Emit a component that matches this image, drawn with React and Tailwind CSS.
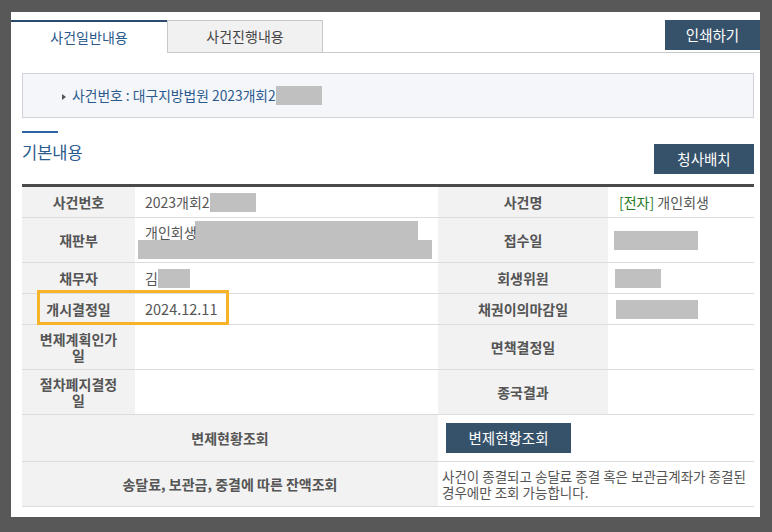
import React from "react";

const FONT = { fontFamily: '"Noto Sans CJK KR", "Noto Sans", sans-serif' };

function Label({ children, className = "" }) {
  return (
    <div
      className={
        "bg-[#f2f2f2] flex items-center justify-center text-center font-bold text-[#555555] text-[14px] leading-[16px] whitespace-nowrap " +
        className
      }
    >
      {children}
    </div>
  );
}

function Redact({ w, h = 19, className = "" }) {
  return (
    <span
      className={"inline-block bg-[#c0c0c0] align-middle " + className}
      style={{ width: w, height: h }}
    />
  );
}

export default function App() {
  return (
    <div
      className="w-[772px] h-[532px] bg-[#585858] pt-[12px] pl-[11px] pr-[12px]"
      style={FONT}
    >
      <div className="bg-white h-[505px] w-[749px] pt-[8px]">
        {/* tabs */}
        <div className="flex justify-between items-start border-b border-[#c8c8c8]">
          <div className="flex">
            <div className="relative z-10 w-[156px] h-[33px] -mb-px bg-white border-t-2 border-[#2c4a6e] flex items-center justify-center text-[14px] text-[#2b5a8c]">
              사건일반내용
            </div>
            <div className="w-[156px] h-[32px] bg-[#f1f1f1] border border-b-0 border-[#c8c8c8] flex items-center justify-center text-[14px] text-[#444444]">
              사건진행내용
            </div>
          </div>
          <button className="w-[95px] h-[30px] bg-[#36526a] text-white text-[14.5px] flex items-center justify-center">
            인쇄하기
          </button>
        </div>

        <div className="pl-[11px] pr-[6px]">
          {/* info box */}
          <div className="mt-[20px] h-[45px] bg-[#f5f6fa] border border-[#d0d2d8] flex items-center pl-[39px] text-[13.8px] text-[#2b5a8c]">
            <svg width="4" height="6" viewBox="0 0 4 6" className="mt-[3px] mr-[6px]">
              <path d="M0 0 L4 3 L0 6 Z" fill="#555555" />
            </svg>
            <span>사건번호 : 대구지방법원 2023개회2</span>
            <Redact w={46} />
          </div>

          {/* section header */}
          <div className="mt-[13px] flex justify-between items-start">
            <div>
              <div className="w-[36px] h-[2px] bg-[#2a64a4]" />
              <div className="mt-[9px] text-[16.5px] leading-[20px] text-[#2b5a8c]">
                기본내용
              </div>
            </div>
            <button className="mt-[13px] w-[100px] h-[30px] bg-[#36526a] text-white text-[14.5px] flex items-center justify-center">
              청사배치
            </button>
          </div>

          {/* table */}
          <div className="mt-[10px] border-t-[3px] border-[#4a4a4a] text-[14px] text-[#555555]">
            {/* row 1 */}
            <div className="flex h-[31px] border-b border-[#dcdcdc]">
              <Label className="w-[113px]">사건번호</Label>
              <div className="w-[303px] flex items-center pl-[10px]">
                <span>2023개회2</span>
                <Redact w={46} />
              </div>
              <Label className="w-[170px]">사건명</Label>
              <div className="flex-1 flex items-center pl-[11px]">
                <span className="text-[#1f7a1f]">[전자]</span>
                <span>&nbsp;개인회생</span>
              </div>
            </div>
            {/* row 2 */}
            <div className="flex h-[45px] border-b border-[#dcdcdc]">
              <Label className="w-[113px]">재판부</Label>
              <div className="relative w-[303px] pl-[10px] pt-[5px] leading-[18px]">
                <span className="absolute left-[60px] top-[3px] w-[223px] h-[19px] bg-[#c0c0c0]" />
                <span className="absolute left-[3px] top-[22px] w-[294px] h-[19px] bg-[#c0c0c0]" />
                <span className="relative">개인회생</span>
              </div>
              <Label className="w-[170px]">접수일</Label>
              <div className="flex-1 flex items-center pl-[6px]">
                <Redact w={84} />
              </div>
            </div>
            {/* row 3 */}
            <div className="flex h-[31px] border-b border-[#dcdcdc]">
              <Label className="w-[113px]">채무자</Label>
              <div className="w-[303px] flex items-center pl-[10px]">
                <span>김</span>
                <Redact w={32} />
              </div>
              <Label className="w-[170px]">회생위원</Label>
              <div className="flex-1 flex items-center pl-[7px]">
                <Redact w={46} />
              </div>
            </div>
            {/* row 4 */}
            <div className="relative flex h-[31px] border-b border-[#dcdcdc]">
              <Label className="w-[113px]">개시결정일</Label>
              <div className="w-[303px] flex items-center pl-[10px] text-[14.5px]">
                2024.12.11
              </div>
              <Label className="w-[170px]">채권이의마감일</Label>
              <div className="flex-1 flex items-center pl-[8px]">
                <Redact w={82} />
              </div>
              <div className="absolute left-[15px] top-[-4px] w-[192px] h-[35px] border-[3px] border-[#f6b42b]" />
            </div>
            {/* row 5 */}
            <div className="flex h-[45px] border-b border-[#dcdcdc]">
              <Label className="w-[113px]">
                변제계획인가
                <br />
                일
              </Label>
              <div className="w-[303px]" />
              <Label className="w-[170px]">면책결정일</Label>
              <div className="flex-1" />
            </div>
            {/* row 6 */}
            <div className="flex h-[45px] border-b border-[#dcdcdc]">
              <Label className="w-[113px]">
                절차폐지결정
                <br />
                일
              </Label>
              <div className="w-[303px]" />
              <Label className="w-[170px]">종국결과</Label>
              <div className="flex-1" />
            </div>
            {/* row 7 */}
            <div className="flex h-[47px] border-b border-[#dcdcdc]">
              <Label className="w-[416px]">변제현황조회</Label>
              <div className="flex-1 flex items-center pl-[8px]">
                <button className="w-[125px] h-[30px] bg-[#36526a] text-white text-[14.5px] flex items-center justify-center">
                  변제현황조회
                </button>
              </div>
            </div>
            {/* row 8 */}
            <div className="flex h-[45px] border-b border-[#dcdcdc]">
              <Label className="w-[416px]">송달료, 보관금, 중결에 따른 잔액조회</Label>
              <div className="flex-1 flex items-center pl-[4px] text-[13.5px] leading-[16px] whitespace-nowrap">
                <div>
                  사건이 종결되고 송달료 종결 혹은 보관금계좌가 종결된
                  <br />
                  경우에만 조회 가능합니다.
                </div>
              </div>
            </div>
          </div>
        </div>
      </div>
    </div>
  );
}
